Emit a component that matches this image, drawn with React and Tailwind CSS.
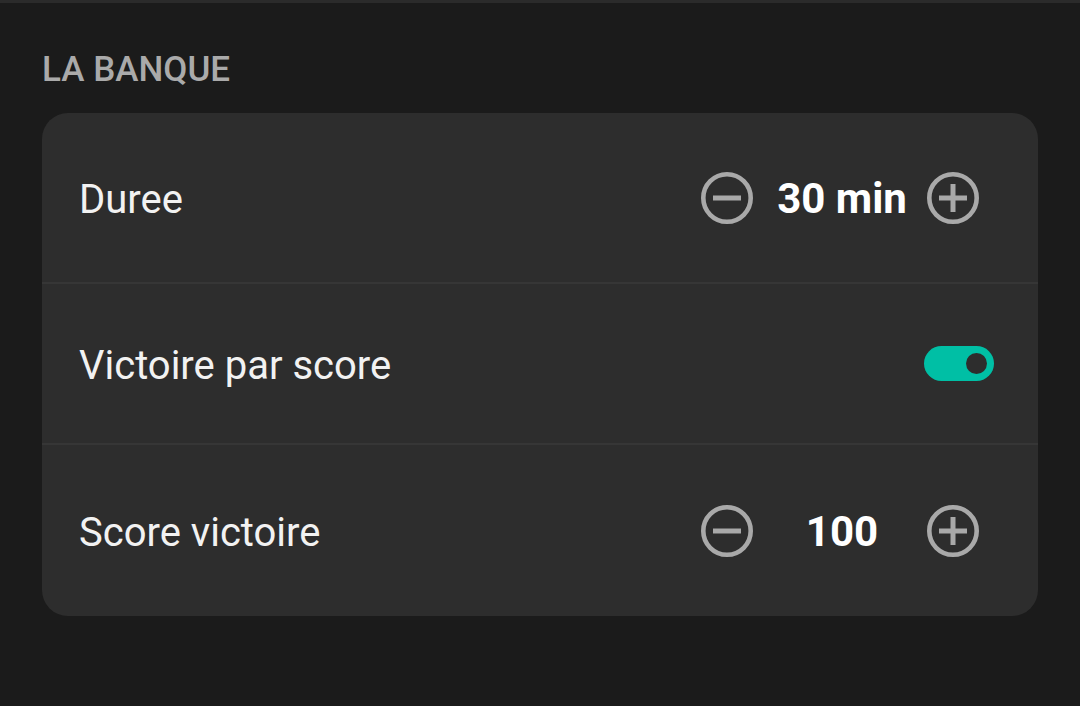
import React, { useState } from "react";

function MinusCircle() {
  return (
    <svg width="52" height="52" viewBox="0 0 52 52" fill="none">
      <circle cx="26" cy="26" r="23.7" stroke="#a9a9a9" strokeWidth="4.6" />
      <path d="M12 26h28" stroke="#a9a9a9" strokeWidth="5" />
    </svg>
  );
}

function PlusCircle() {
  return (
    <svg width="52" height="52" viewBox="0 0 52 52" fill="none">
      <circle cx="26" cy="26" r="23.7" stroke="#a9a9a9" strokeWidth="4.6" />
      <path d="M12 26h28M26 12v28" stroke="#a9a9a9" strokeWidth="5" />
    </svg>
  );
}

function Stepper({ value }) {
  return (
    <div className="flex items-center mr-[15px]">
      <button className="flex">
        <MinusCircle />
      </button>
      <div className="w-[174px] pl-[4px] pt-[3px] text-center text-[42px] font-bold text-white leading-none">
        {value}
      </div>
      <button className="flex">
        <PlusCircle />
      </button>
    </div>
  );
}

function Toggle({ on, onChange }) {
  return (
    <button
      onClick={() => onChange(!on)}
      className={
        "flex items-center w-[70px] h-[35px] rounded-full px-[7px] " +
        (on ? "bg-[#00bfa5] justify-end" : "bg-[#555555] justify-start")
      }
    >
      <span className="block w-[21px] h-[21px] rounded-full bg-[#2d2d2d]" />
    </button>
  );
}

export default function App() {
  const [scoreWin, setScoreWin] = useState(true);

  return (
    <div
      className="w-full h-screen bg-[#1b1b1b] border-t-[3px] border-[#2b2b2b] px-[42px] pt-[49px]"
      style={{ fontFamily: "Roboto, 'Noto Sans', sans-serif" }}
    >
      {/* header */}
      <h2 className="text-[35px] font-medium leading-none text-[#aaaaaa] mb-[26px]">
        LA BANQUE
      </h2>

      {/* settings card */}
      <div className="bg-[#2d2d2d] rounded-[26px] overflow-hidden">
        <div className="h-[171px] flex items-center justify-between pl-[37px] pr-[44px] border-b-2 border-[#363636]">
          <span className="pt-[5px] text-[40px] text-[#f2f2f2]">Duree</span>
          <Stepper value="30 min" />
        </div>

        <div className="h-[161px] flex items-center justify-between pl-[37px] pr-[44px] border-b-2 border-[#363636]">
          <span className="pt-[5px] text-[40px] text-[#f2f2f2]">Victoire par score</span>
          <Toggle on={scoreWin} onChange={setScoreWin} />
        </div>

        <div className="h-[171px] flex items-center justify-between pl-[37px] pr-[44px]">
          <span className="pt-[5px] text-[40px] text-[#f2f2f2]">Score victoire</span>
          <Stepper value="100" />
        </div>
      </div>
    </div>
  );
}
